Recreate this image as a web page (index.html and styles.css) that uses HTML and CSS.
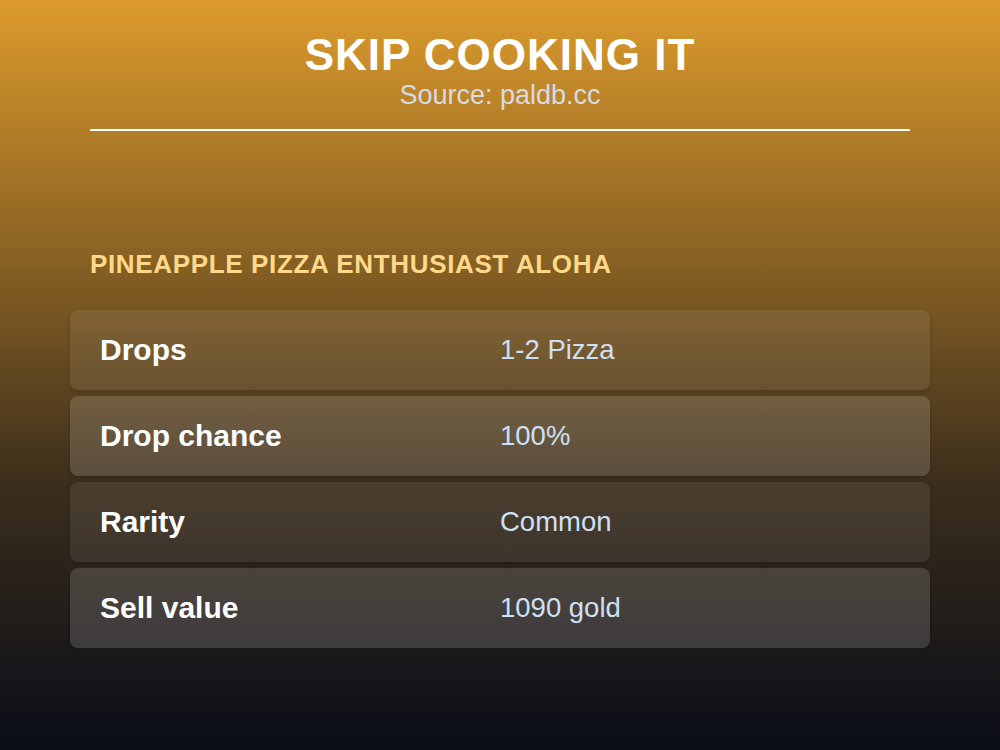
FILE: index.html
```html
<!DOCTYPE html>
<html lang="en">
<head>
<meta charset="utf-8">
<title>Skip Cooking It</title>
<link rel="stylesheet" href="styles.css">
</head>
<body>
<div class="page">
  <header class="header">
    <h1 class="title">SKIP COOKING IT</h1>
    <div class="source">Source: paldb.cc</div>
  </header>
  <h2 class="item-name">PINEAPPLE PIZZA ENTHUSIAST ALOHA</h2>
  <div class="rows">
    <div class="row row-a"><span class="label">Drops</span><span class="value">1-2 Pizza</span></div>
    <div class="row row-b"><span class="label">Drop chance</span><span class="value">100%</span></div>
    <div class="row row-a"><span class="label">Rarity</span><span class="value">Common</span></div>
    <div class="row row-b"><span class="label">Sell value</span><span class="value">1090 gold</span></div>
  </div>
</div>
</body>
</html>
```

FILE: styles.css
```css
html, body {
  margin: 0;
  padding: 0;
}
body {
  width: 1000px;
  height: 750px;
  overflow: hidden;
  font-family: "Liberation Sans", Arial, sans-serif;
  background: linear-gradient(to bottom, #dd9b2c 0%, #7a5822 40%, #3a2d1c 65%, #0a0d18 100%);
}
.page {
  padding: 29px 90px 0;
}
.header {
  text-align: center;
  padding-bottom: 19px;
  border-bottom: 2px solid #ffffff;
}
.title {
  margin: 0;
  font-size: 44px;
  line-height: 51px;
  font-weight: 700;
  letter-spacing: 1px;
  color: #ffffff;
}
.source {
  font-size: 27px;
  line-height: 30px;
  color: #d8dbe2;
}
.item-name {
  margin: 118px 0 0;
  font-size: 26px;
  line-height: 30px;
  font-weight: 700;
  letter-spacing: 0.65px;
  color: #ffd88a;
}
.rows {
  margin: 31px -20px 0;
  display: flex;
  flex-direction: column;
  gap: 6px;
}
.row {
  height: 80px;
  padding: 0 30px;
  border-radius: 8px;
  display: grid;
  grid-template-columns: 1fr 1fr;
  align-items: center;
  box-shadow: 0 2px 4px rgba(0, 0, 0, 0.15);
}
.row-a {
  background: rgba(255, 255, 255, 0.08);
}
.row-b {
  background: rgba(255, 255, 255, 0.15);
}
.label {
  font-size: 30px;
  font-weight: 700;
  color: #ffffff;
}
.value {
  font-size: 27.5px;
  color: #cfe0f3;
}
```
